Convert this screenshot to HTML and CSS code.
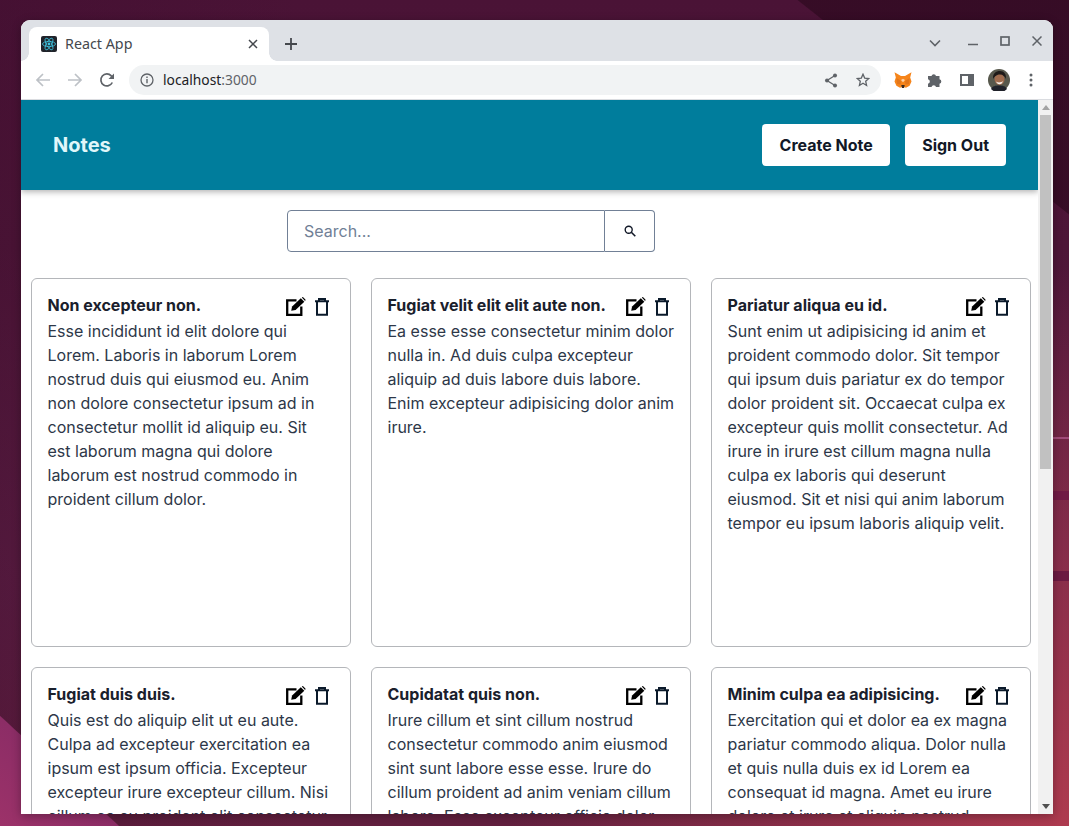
FILE: index.html
```html
<!DOCTYPE html>
<html lang="en">
<head>
  <meta charset="UTF-8" />
  <title>React App</title>
  <link rel="stylesheet" href="styles.css">
</head>
<body>
  <div class="window">
    <!-- Tab strip -->
    <div class="tabstrip">
      <div class="tab">
        <svg class="favicon" width="16" height="16" viewBox="0 0 16 16">
          <rect width="16" height="16" rx="2" fill="#20232a"/>
          <g fill="none" stroke="#3fc4e0" stroke-width="0.8">
            <ellipse cx="8" cy="8" rx="6.5" ry="2.6"/>
            <ellipse cx="8" cy="8" rx="6.5" ry="2.6" transform="rotate(60 8 8)"/>
            <ellipse cx="8" cy="8" rx="6.5" ry="2.6" transform="rotate(120 8 8)"/>
          </g>
          <circle cx="8" cy="8" r="1.4" fill="#3fc4e0"/>
        </svg>
        <span class="tab-title">React App</span>
        <svg class="tab-close" width="10" height="10" viewBox="0 0 10 10"><path d="M1 1l8 8M9 1l-8 8" stroke="#45484d" stroke-width="1.5"/></svg>
      </div>
      <svg class="new-tab" width="14" height="14" viewBox="0 0 14 14"><path d="M7 1v12M1 7h12" stroke="#45484d" stroke-width="1.8"/></svg>
      <div class="window-controls">
        <svg class="ctl-more" width="12" height="8" viewBox="0 0 12 8"><path d="M1 1.5l5 5 5-5" fill="none" stroke="#5f6368" stroke-width="1.6"/></svg>
        <svg class="ctl-min" width="10" height="10" viewBox="0 0 10 10"><path d="M0 8.5h10" stroke="#5f6368" stroke-width="1.6"/></svg>
        <svg class="ctl-max" width="10" height="10" viewBox="0 0 10 10"><rect x="1" y="1" width="8" height="8" fill="none" stroke="#5f6368" stroke-width="1.7"/></svg>
        <svg class="ctl-close" width="10" height="10" viewBox="0 0 10 10"><path d="M.5.5l9 9M9.5.5l-9 9" stroke="#5f6368" stroke-width="1.5"/></svg>
      </div>
    </div>

    <!-- Toolbar -->
    <div class="toolbar">
      <svg class="nav-icon" width="16" height="16" viewBox="0 0 16 16"><path d="M15 8H2M8 2L2 8l6 6" fill="none" stroke="#bdc1c6" stroke-width="1.7"/></svg>
      <svg class="nav-icon" width="16" height="16" viewBox="0 0 16 16"><path d="M1 8h13M8 2l6 6-6 6" fill="none" stroke="#bdc1c6" stroke-width="1.7"/></svg>
      <svg class="nav-icon" width="16" height="16" viewBox="0 0 16 16"><path d="M13.3 10.5A6 6 0 1 1 12.3 3.8L14 5.5" fill="none" stroke="#5f6368" stroke-width="1.7"/><path d="M15 1.5V7H9.5z" fill="#5f6368"/></svg>
      <div class="omnibox">
        <svg width="14" height="14" viewBox="0 0 14 14"><circle cx="7" cy="7" r="6" fill="none" stroke="#5f6368" stroke-width="1.3"/><path d="M7 6v4.2M7 3.6v1.3" stroke="#5f6368" stroke-width="1.4"/></svg>
        <span class="url">localhost<span class="url-port">:3000</span></span>
        <svg class="omni-share" width="14" height="15" viewBox="0 0 14 15"><path d="M11 2.5L3 7.5l8 5" fill="none" stroke="#5f6368" stroke-width="1.3"/><circle cx="11" cy="2.5" r="2" fill="#5f6368"/><circle cx="3" cy="7.5" r="2" fill="#5f6368"/><circle cx="11" cy="12.5" r="2" fill="#5f6368"/></svg>
        <svg width="14" height="14" viewBox="0 0 14 14"><path d="M7 1.2l1.7 3.9 4.1.4-3.1 2.8.9 4.2L7 10.3l-3.6 2.2.9-4.2L1.2 5.500l4.1-.4z" fill="none" stroke="#5f6368" stroke-width="1.3"/></svg>
      </div>
      <div class="extensions">
        <span class="ext-slot">
          <svg width="18" height="17" viewBox="0 0 18 17">
            <path d="M0.500 0.300L7 4h4l6.500-3.700-1.300 5.200 1.300 4-1.900 4.200-3.600 2.100-2.200-.8H8.200l-2.200.8-3.600-2.100L.5 9.500l1.300-4z" fill="#f6851b"/>
            <path d="M2.500 6l4.500 3-.5 3.500-3.500-.5zM15.500 6L11 9l.5 3.500 3.500-.5z" fill="#e2761b"/>
            <path d="M7.300 13h3.400l-.7 3H8z" fill="#3a2a20"/>
            <path d="M7 8l2 2.200L11 8 9 6.800z" fill="#ffd3a8"/>
          </svg>
        </span>
        <span class="ext-slot">
          <svg width="16" height="16" viewBox="0 0 16 16"><path d="M1 4h3.500a2.300 2.300 0 0 1 4.500 0H12.500v3.200a2.300 2.300 0 0 1 0 4.500V15H9a2.300 2.300 0 0 0-4.500 0H1v-3.300a2.300 2.300 0 0 0 0-4.500z" fill="#5f6368"/></svg>
        </span>
        <span class="ext-slot">
          <svg width="14" height="12" viewBox="0 0 14 12"><rect x="1" y="1" width="12" height="10" fill="none" stroke="#5f6368" stroke-width="2"/><rect x="8" y="1" width="5" height="10" fill="#5f6368"/></svg>
        </span>
        <span class="ext-slot">
          <svg width="22" height="22" viewBox="0 0 22 22">
            <circle cx="11" cy="11" r="11" fill="#57584c"/>
            <path d="M5 10C4.500 4.500 8 2 12 2s6.500 3 6 8c-1-2.500-3-4-6-4s-6 1.500-7 4z" fill="#1e1a18"/>
            <path d="M6.500 10c0-3 2.500-4.500 5.500-4.500s4.500 2 4.500 5-2.500 5.500-5 5.500-5-3-5-6z" fill="#a06c4e"/>
            <path d="M8 12.500c2 1.300 5 1.300 7-.5-.3 2-2 3.300-3.500 3.300S8.500 14 8 12.500z" fill="#f5efe9"/>
            <path d="M3 20c1.500-3 4.500-3.500 8-3.500s6.500.5 8 3.500a11 11 0 0 1-16 0z" fill="#20222a"/>
          </svg>
        </span>
        <span class="ext-slot">
          <svg width="4" height="14" viewBox="0 0 4 14"><circle cx="2" cy="2" r="1.500" fill="#5f6368"/><circle cx="2" cy="7" r="1.500" fill="#5f6368"/><circle cx="2" cy="12" r="1.500" fill="#5f6368"/></svg>
        </span>
      </div>
    </div>

    <!-- Page -->
    <div class="viewport">
      <div class="page">
        <header class="app-header">
          <span class="brand">Notes</span>
          <div class="header-actions">
            <button class="btn btn-create">Create Note</button>
            <button class="btn">Sign Out</button>
          </div>
        </header>

        <form class="search">
          <input class="search-input" type="text" placeholder="Search...">
          <button class="search-btn" type="button">
            <svg width="12" height="12" viewBox="0 0 12 12"><circle cx="4.700" cy="4.700" r="3.500" fill="none" stroke="#111827" stroke-width="1.400"/><path d="M7.300 7.300l4 4" stroke="#111827" stroke-width="1.600"/></svg>
          </button>
        </form>

        <main class="notes-grid" id="notes"></main>
      </div>

      <!-- Scrollbar -->
      <div class="scrollbar">
        <div class="sb-arrow sb-up"></div>
        <div class="sb-track"><div class="sb-thumb"></div></div>
        <div class="sb-arrow sb-down"></div>
      </div>
    </div>
  </div>

  <script>
    const notes = [
      ["Non excepteur non.", "Esse incididunt id elit dolore qui Lorem. Laboris in laborum Lorem nostrud duis qui eiusmod eu. Anim non dolore consectetur ipsum ad in consectetur mollit id aliquip eu. Sit est laborum magna qui dolore laborum est nostrud commodo in proident cillum dolor."],
      ["Fugiat velit elit elit aute non.", "Ea esse esse consectetur minim dolor nulla in. Ad duis culpa excepteur aliquip ad duis labore duis labore. Enim excepteur adipisicing dolor anim irure."],
      ["Pariatur aliqua eu id.", "Sunt enim ut adipisicing id anim et proident commodo dolor. Sit tempor qui ipsum duis pariatur ex do tempor dolor proident sit. Occaecat culpa ex excepteur quis mollit consectetur. Ad irure in irure est cillum magna nulla culpa ex laboris qui deserunt eiusmod. Sit et nisi qui anim laborum tempor eu ipsum laboris aliquip velit."],
      ["Fugiat duis duis.", "Quis est do aliquip elit ut eu aute. Culpa ad excepteur exercitation ea ipsum est ipsum officia. Excepteur excepteur irure excepteur cillum. Nisi cillum ea eu proident elit consectetur."],
      ["Cupidatat quis non.", "Irure cillum et sint cillum nostrud consectetur commodo anim eiusmod sint sunt labore esse esse. Irure do cillum proident ad anim veniam cillum labore. Esse excepteur officia dolor."],
      ["Minim culpa ea adipisicing.", "Exercitation qui et dolor ea ex magna pariatur commodo aliqua. Dolor nulla et quis nulla duis ex id Lorem ea consequat id magna. Amet eu irure dolore et irure et aliquip nostrud."]
    ];

    const editIcon = '<svg class="icon-edit" width="20" height="19" viewBox="0 0 20 19"><path d="M10.500 3.400H1.200V17.800H15.300V9.500" fill="none" stroke="#000" stroke-width="2.300"/><path d="M5.200 13.800l.9-4.300L14.800 1.200l3.500 3.500-8.700 8.300z" fill="#000"/><path d="M15.800.6l1.100-.5 2.700 2.700-.5 1.100z" fill="#000"/></svg>';
    const trashIcon = '<svg class="icon-trash" width="14" height="18" viewBox="0 0 14 18"><path d="M0 3.200h14M4 3.200V1h6v2.200" fill="none" stroke="#0b1a2b" stroke-width="2"/><path d="M2 3.200V16.800h10V3.200" fill="none" stroke="#0b1a2b" stroke-width="2"/></svg>';

    document.getElementById('notes').innerHTML = notes.map(n => `
      <article class="note">
        <div class="note-head">
          <h3 class="note-title">${n[0]}</h3>
          <div class="note-actions">${editIcon}${trashIcon}</div>
        </div>
        <p class="note-body">${n[1]}</p>
      </article>`).join('');
  </script>
</body>
</html>
```

FILE: styles.css
```css
* {
  box-sizing: border-box;
}
html,
body {
  height: 100%;
  margin: 0;
  overflow: hidden;
}
body {
  padding: 20px 16px 12px 21px;
  font-family: Inter, sans-serif;
  background-color: #4e1638;
  background-image:
    linear-gradient(222.8deg, transparent 1251px, #8c2d66 1252px, #9c3269 1332px),
    linear-gradient(38.3deg, transparent 1142px, rgba(30, 4, 18, 0.45) 1143px),
    linear-gradient(#a04a78, #a04a78),
    linear-gradient(#701a45, #701a45),
    linear-gradient(#6c1a42, #6c1a42),
    radial-gradient(circle at 100% 100%, rgba(178, 60, 80, 0.95) 0, rgba(178, 60, 80, 0) 560px),
    linear-gradient(90deg, rgba(60, 12, 44, 0.35) 0, transparent 300px),
    linear-gradient(180deg, #4a1336 0, #4e1638 30%, #5e1f45 70%, #62203f 100%);
  background-repeat: no-repeat;
  background-size: 100% 100%, 100% 100%, 16px 2px, 16px 9px, 16px 10px, 100% 100%, 100% 100%, 100% 100%;
  background-position: 0 0, 0 0, right 0 top 437px, right 0 top 491px, right 0 top 571px, 0 0, 0 0, 0 0;
}
.window {
  height: 794px;
  display: flex;
  flex-direction: column;
  border-radius: 9px 9px 0 0;
  overflow: hidden;
  background: #fff;
  box-shadow: 0 2px 10px rgba(0, 0, 0, 0.3);
}

/* browser chrome */
.tabstrip {
  height: 41px;
  flex: none;
  display: flex;
  align-items: flex-end;
  padding-left: 8px;
  background-color: #dee1e6;
}
.tab {
  position: relative;
  width: 240px;
  height: 34px;
  display: flex;
  align-items: center;
  padding: 0 12px;
  background-color: #fff;
  border-radius: 8px 8px 0 0;
}
.tab::before,
.tab::after {
  content: "";
  position: absolute;
  bottom: 0;
  width: 8px;
  height: 8px;
}
.tab::before {
  left: -8px;
  background: radial-gradient(circle at 0 0, transparent 7.500px, #fff 8px);
}
.tab::after {
  right: -8px;
  background: radial-gradient(circle at 100% 0, transparent 7.500px, #fff 8px);
}
.tab-title {
  flex: 1;
  margin: 0 0 2px 8px;
  font-family: "Noto Sans", sans-serif;
  font-size: 14.300px;
  color: #45484d;
}
.tab-close {
  margin-right: -1px;
}
.new-tab {
  margin: 0 0 10px 15px;
}
.window-controls {
  margin-left: auto;
  display: flex;
  align-items: center;
  height: 100%;
  padding-top: 1px;
}
.ctl-more {
  margin-top: 4px;
}
.ctl-min {
  margin-left: 27px;
}
.ctl-max {
  margin-left: 22px;
}
.ctl-close {
  margin: 0 11px 0 22px;
}
.toolbar {
  height: 39px;
  flex: none;
  display: flex;
  align-items: center;
  padding-left: 14px;
  background-color: #fff;
  border-bottom: 1px solid #dadce0;
}
.nav-icon {
  margin-right: 16px;
}
.omnibox {
  width: 752px;
  height: 30px;
  margin-left: -2px;
  display: flex;
  align-items: center;
  gap: 9px;
  padding: 0 11px;
  background-color: #f1f3f4;
  border-radius: 15px;
}
.url {
  flex: 1;
  margin-bottom: 2px;
  font-family: "Noto Sans", sans-serif;
  font-size: 13.800px;
  color: #202124;
}
.url-port {
  color: #5f6368;
}
.omni-share {
  margin-right: 9px;
}
.extensions {
  display: flex;
  align-items: center;
  margin-left: 6px;
}
.ext-slot {
  width: 32px;
  height: 24px;
  display: flex;
  align-items: center;
  justify-content: center;
}

/* page */
.viewport {
  flex: 1;
  min-height: 0;
  display: flex;
  overflow: hidden;
}
.page {
  flex: 1;
  min-width: 0;
  overflow: hidden;
}
.app-header {
  height: 90px;
  display: flex;
  align-items: center;
  justify-content: space-between;
  padding: 0 32px;
  background-color: #007d9c;
  box-shadow: 0 2px 6px rgba(0, 0, 0, 0.3);
}
.brand {
  font-size: 20px;
  font-weight: 700;
  color: #e0f7fa;
}
.header-actions {
  display: flex;
  gap: 15px;
}
.btn {
  height: 42px;
  padding: 0 17px;
  border: none;
  border-radius: 4px;
  background-color: #fff;
  font-family: Inter, sans-serif;
  font-size: 16px;
  font-weight: 700;
  color: #111827;
}
.btn-create {
  width: 128px;
  padding: 0;
}
.search {
  width: 368px;
  height: 42px;
  display: flex;
  margin: 20px 0 26px 266px;
}
.search-input {
  flex: 1;
  min-width: 0;
  padding: 0 16px;
  border: 1px solid #718096;
  border-radius: 4px 0 0 4px;
  font-family: Inter, sans-serif;
  font-size: 16px;
  outline: none;
}
.search-input::placeholder {
  color: #718096;
}
.search-btn {
  width: 50px;
  display: flex;
  align-items: center;
  justify-content: center;
  padding: 0;
  border: 1px solid #718096;
  border-left: none;
  border-radius: 0 4px 4px 0;
  background-color: #fff;
}
.notes-grid {
  display: grid;
  grid-template-columns: repeat(3, 320px);
  grid-auto-rows: 369px;
  gap: 20px;
  padding-left: 10px;
}
.note {
  padding: 15px 15.750px 15px 15.500px;
  border: 1px solid #b4b6ba;
  border-radius: 6px;
  background-color: #fff;
}
.note-head {
  display: flex;
  justify-content: space-between;
  height: 25px;
}
.note-title {
  margin: -1px 0 0;
  font-size: 16px;
  line-height: 24px;
  font-weight: 700;
  color: #1a202c;
}
.note-actions {
  display: flex;
  align-items: flex-start;
  gap: 9px;
  margin: 3px 5.250px 0 0;
}
.icon-trash {
  margin-top: 1px;
}
.note-body {
  margin: 0;
  font-size: 16px;
  line-height: 24px;
  color: #2d3748;
}

/* scrollbar */
.scrollbar {
  width: 15px;
  flex: none;
  display: flex;
  flex-direction: column;
  align-items: center;
  background-color: #f1f1f1;
}
.sb-arrow {
  width: 0;
  height: 0;
  flex: none;
  margin: 5px 0;
  border-left: 4px solid transparent;
  border-right: 4px solid transparent;
}
.sb-up {
  border-bottom: 5px solid #a3a3a3;
}
.sb-down {
  border-top: 5px solid #505050;
}
.sb-track {
  flex: 1;
  width: 100%;
  padding: 0 2px;
}
.sb-thumb {
  height: 354px;
  background-color: #c1c1c1;
}
```
